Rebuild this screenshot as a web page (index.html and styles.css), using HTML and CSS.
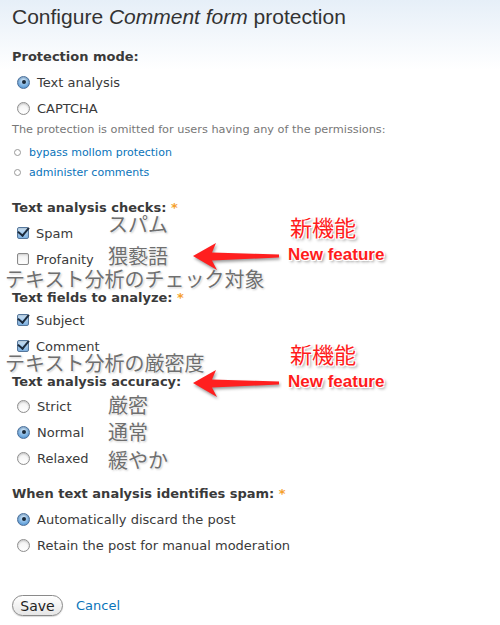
FILE: index.html
```html
<!DOCTYPE html>
<html lang="en">
<head>
    <meta charset="UTF-8">
    <title>Configure Comment form protection</title>
    <link rel="stylesheet" href="styles.css">
</head>
<body>
    <h1>Configure <em>Comment form</em> protection</h1>

    <form class="mollom-form">
        <div class="form-item first">
            <label class="title">Protection mode:</label>
            <div class="option"><span class="radio on"></span>Text analysis</div>
            <div class="option"><span class="radio"></span>CAPTCHA</div>
            <div class="description">The protection is omitted for users having any of the permissions:</div>
            <ul class="perms">
                <li><a href="#">bypass mollom protection</a></li>
                <li><a href="#">administer comments</a></li>
            </ul>
        </div>

        <div class="form-item checks">
            <label class="title">Text analysis checks: <span class="req">*</span></label>
            <div class="option"><span class="check on"></span>Spam</div>
            <div class="option"><span class="check"></span>Profanity</div>
        </div>

        <div class="form-item fields">
            <label class="title">Text fields to analyze: <span class="req">*</span></label>
            <div class="option"><span class="check on"></span>Subject</div>
            <div class="option"><span class="check on"></span>Comment</div>
        </div>

        <div class="form-item accuracy">
            <label class="title">Text analysis accuracy:</label>
            <div class="option"><span class="radio"></span>Strict</div>
            <div class="option"><span class="radio on"></span>Normal</div>
            <div class="option"><span class="radio"></span>Relaxed</div>
        </div>

        <div class="form-item discard">
            <label class="title">When text analysis identifies spam: <span class="req">*</span></label>
            <div class="option"><span class="radio on"></span>Automatically discard the post</div>
            <div class="option"><span class="radio"></span>Retain the post for manual moderation</div>
        </div>

        <div class="actions">
            <button type="button" class="save">Save</button>
            <a href="#">Cancel</a>
        </div>
    </form>

    <!-- annotations drawn on top of the screenshot -->
    <div class="notes">
        <span class="jp" style="left:108px; top:210px;">スパム</span>
        <span class="jp" style="left:108px; top:242px;">猥褻語</span>
        <span class="jp" style="left:5px; top:265px;">テキスト分析のチェック対象</span>
        <span class="jp" style="left:5px; top:349px;">テキスト分析の厳密度</span>
        <span class="jp" style="left:108px; top:391px;">厳密</span>
        <span class="jp" style="left:108px; top:418px;">通常</span>
        <span class="jp" style="left:108px; top:446px;">緩やか</span>

        <span class="new-jp" style="left:290px; top:211px;">新機能</span>
        <span class="new-en" style="left:288px; top:245px;">New feature</span>
        <span class="new-jp" style="left:290px; top:338px;">新機能</span>
        <span class="new-en" style="left:288px; top:372px;">New feature</span>

        <svg class="arrow" style="left:190px; top:240px;" width="92" height="34" viewBox="0 0 92 34">
            <path d="M3 16 L26 3 L22 12.5 L89 14.5 L89 17.5 L22 20.5 L27 30 Z"/>
        </svg>
        <svg class="arrow" style="left:190px; top:367px;" width="92" height="34" viewBox="0 0 92 34">
            <path d="M3 16 L26 3 L22 12.5 L89 14.5 L89 17.5 L22 20.5 L27 30 Z"/>
        </svg>
    </div>
</body>
</html>
```

FILE: styles.css
```css
body {
    margin: 0;
    padding: 0 12px;
    position: relative;
    min-height: 625px;
    font-family: 'DejaVu Sans', Verdana, sans-serif;
    font-size: 13px;
    color: #3a3a3a;
    background: linear-gradient(#e6eff8, #ffffff 70px);
}
h1 {
    margin: 0;
    padding-top: 5px;
    font-family: 'Liberation Sans', Arial, sans-serif;
    font-size: 21px;
    font-weight: normal;
    line-height: 24px;
    color: #333;
}
.form-item.first { margin-top: 19px; }
.form-item.checks { margin-top: 17px; }
.form-item.fields { margin-top: 17px; }
.form-item.fields .title { margin-bottom: 0; }
.form-item.accuracy { margin-top: 14px; }
.form-item.accuracy .title { margin-bottom: 2px; }
.form-item.discard { margin-top: 14px; }
.title {
    display: block;
    font-weight: bold;
    line-height: 18px;
    margin-bottom: 3px;
}
.req {
    color: #f5a02c;
}
.option {
    display: flex;
    align-items: center;
    height: 26px;
    padding-left: 5px;
    font-size: 13px;
}
.radio {
    width: 11px;
    height: 11px;
    border-radius: 50%;
    border: 1px solid #8e8e8e;
    background: linear-gradient(#f2f2f2, #ffffff);
    box-shadow: inset 0 1px 2px rgba(0, 0, 0, 0.2);
    margin-right: 7px;
    position: relative;
}
.radio.on {
    border-color: #4a6e99;
    background: radial-gradient(circle at 50% 30%, #d4e9fb, #6aa6dd 70%, #4f8fcf);
}
.radio.on::after {
    content: "";
    position: absolute;
    left: 3.5px;
    top: 3.5px;
    width: 4px;
    height: 4px;
    border-radius: 50%;
    background: #1a2a3a;
}
.check {
    width: 10px;
    height: 10px;
    border-radius: 2px;
    border: 1px solid #8a8a8a;
    background: linear-gradient(#f0f0f0, #ffffff);
    box-shadow: inset 0 1px 2px rgba(0, 0, 0, 0.15);
    margin-right: 7px;
    position: relative;
}
.check.on {
    border-color: #55779c;
    background: linear-gradient(#cfe5f8, #7fb2e2);
}
.check.on::after {
    content: "";
    position: absolute;
    left: 2px;
    top: -3px;
    width: 5px;
    height: 9px;
    border-right: 2px solid #1c2b3d;
    border-bottom: 2px solid #1c2b3d;
    transform: rotate(40deg);
}
.description {
    margin-top: 1px;
    font-size: 11.3px;
    line-height: 16px;
    color: #777;
}
.perms {
    list-style: none;
    margin: 4px 0 0;
    padding: 0;
}
.perms li {
    display: flex;
    align-items: center;
    height: 20px;
    font-size: 11px;
}
.perms li::before {
    content: "";
    width: 5px;
    height: 5px;
    border-radius: 50%;
    border: 1px solid #999;
    margin: 0 8px 0 2px;
}
a {
    color: #0a74ba;
    text-decoration: none;
}
.actions {
    margin-top: 37px;
    display: flex;
    align-items: center;
    gap: 13px;
    font-size: 13px;
}
.save {
    font-family: 'DejaVu Sans', Verdana, sans-serif;
    font-size: 14px;
    color: #222;
    width: 51px;
    height: 21px;
    padding: 0;
    border: 1px solid #8a8a8a;
    border-radius: 11px;
    background: linear-gradient(#ffffff, #e6e6e6);
    box-shadow: 0 1px 1px rgba(0, 0, 0, 0.15);
}
.notes {
    position: absolute;
    left: 0;
    top: 0;
}
.notes span, .notes svg {
    position: absolute;
    white-space: nowrap;
}
.jp {
    font-family: 'Noto Sans CJK JP', sans-serif;
    font-size: 20px;
    line-height: 28px;
    color: #6f6f6f;
    text-shadow: 0 0 2px #fff, 0 0 2px #fff, 1px 1px 2px rgba(0, 0, 0, 0.25);
}
.new-jp {
    font-family: 'Noto Sans CJK JP', sans-serif;
    font-size: 22px;
    line-height: 30px;
    color: #ff1c1c;
    text-shadow: -1px -1px 0 #fff, 1px -1px 0 #fff, -1px 1px 0 #fff, 1px 1px 0 #fff, 2px 2px 3px rgba(0, 0, 0, 0.45);
}
.new-en {
    font-family: 'Liberation Sans', Arial, sans-serif;
    font-weight: bold;
    font-size: 17px;
    line-height: 20px;
    color: #ff1c1c;
    text-shadow: -1px -1px 0 #fff, 1px -1px 0 #fff, -1px 1px 0 #fff, 1px 1px 0 #fff, 2px 2px 3px rgba(0, 0, 0, 0.45);
}
.arrow path {
    fill: #ff1f1f;
    filter: drop-shadow(1px 2px 1.5px rgba(0, 0, 0, 0.4));
}
```
